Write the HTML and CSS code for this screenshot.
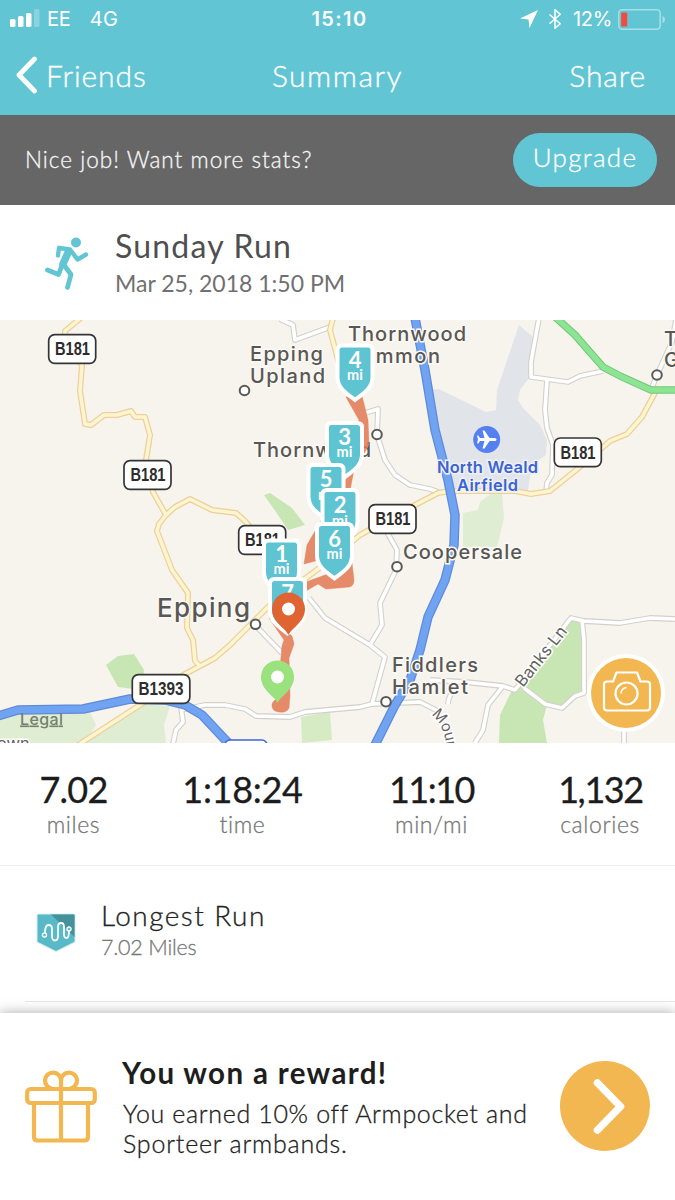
FILE: index.html
```html
<!DOCTYPE html>
<html lang="en">
<head>
<meta charset="utf-8">
<title>Summary</title>
<link rel="stylesheet" href="styles.css">
</head>
<body>
<div class="screen">
  <header class="top">
    <div class="status">
      <div class="status-left">
        <svg class="signal" width="31" height="20" viewBox="0 0 31 20" fill="#fff"><rect x="0" y="11" width="5.500" height="8" rx="1.500"/><rect x="8" y="8" width="5.500" height="11" rx="1.500"/><rect x="16" y="5" width="5.500" height="14" rx="1.500"/><rect x="24" y="1" width="5.500" height="18" rx="1.500" opacity=".25"/></svg>
        <span class="carrier">EE</span><span class="network">4G</span>
      </div>
      <span class="clock">15:10</span>
      <div class="status-right">
        <svg width="18" height="18" viewBox="0 0 18 18" fill="#fff"><path d="M18 0 9.500 18 8.500 9.500 0 8.500Z"/></svg>
        <svg class="bt" width="12" height="20" viewBox="0 0 12 20" fill="none" stroke="#fff" stroke-width="1.500"><path d="M.5 5.500 11.200 14.700 6 19.200V.8l5.200 4.500L.5 14.700"/></svg>
        <span class="percent">12%</span>
        <svg class="battery" width="48" height="21" viewBox="0 0 48 21"><rect x=".8" y=".8" width="41.400" height="19.400" rx="3.500" fill="none" stroke="#a5e0ea" stroke-width="1.500"/><rect x="3.200" y="3.500" width="6" height="14" rx="1" fill="#f4493c"/><path d="M44.500 7v7q2.500-1 2.500-3.500T44.500 7Z" fill="#a5e0ea"/></svg>
      </div>
    </div>
    <nav class="nav">
      <a class="back"><svg width="24" height="38" viewBox="0 0 24 38" fill="none" stroke="#fff" stroke-width="4.800" stroke-linecap="round" stroke-linejoin="round"><path d="M20.500 3 5 19l15.500 16"/></svg><span class="friends">Friends</span></a>
      <span class="title">Summary</span>
      <a class="share">Share</a>
    </nav>
  </header>

  <section class="banner">
    <span class="pitch">Nice job! Want more stats?</span>
    <a class="upgrade">Upgrade</a>
  </section>

  <section class="run">
    <svg class="runner" width="44" height="54" viewBox="0 0 44 54" fill="none" stroke="#62c5d3" stroke-linecap="round" stroke-linejoin="round"><circle cx="31" cy="5.500" r="5" fill="#62c5d3" stroke="none"/><path d="M13 18.500 14 10.800l11 1.700 7.500 10 8.500-5" stroke-width="4.400"/><path d="M23.500 14.500 18 27" stroke-width="7.500"/><path d="M17.500 27 13.500 37.500 2.500 33M19 28l7 9.500L22.500 50.500" stroke-width="4.800"/></svg>
    <div>
      <h1 class="run-name">Sunday Run</h1>
      <p class="run-date">Mar 25, 2018 1:50 PM</p>
    </div>
  </section>

  <svg class="map" width="675" height="423" viewBox="0 320 675 423">
    <defs>
      <path id="shield" d="M-13-.500h26q4.500 0 4.500 4.500v27C17.500 42 9 47 0 54-9 47-17.500 42-17.500 31V4q0-4.500 4.500-4.500Z"/>
      <path id="pin" d="M0 26C-3 19-16.500 13-16.500 0a16.500 16.500 0 0 1 33 0C16.500 13 3 19 0 26Z"/>
      <path id="mount" d="M431 715Q445 724 447 752"/>
    </defs>
    <rect y="320" width="675" height="423" fill="#f7f4ee"/>
    <g fill="#c8e5b4">
      <path d="m264 495 6-2 22 15 13 17-17 5-12-18Z"/>
      <path d="m106 665 12-9 16-2 10 16-2 20-24-3Z"/>
      <path d="m571 618 12 4 1 71-9 4-13 11-15-3-4 15 4 23h-48l1-28 12-25 8-10Z"/>
    </g>
    <g fill="#dfedd3">
      <path d="m463 513 15-3 2-8 12-9h10l2 25-7 29h-34Z"/>
      <path d="M0 714l28-9 62 7 6 13-11 18H0Z"/>
      <path d="m85 743 55-39 30 2-6 19 2 18Z"/>
      <path d="m301 717 29-5 2 28-30 3Z" fill="#d6ebc4"/>
    </g>
    <path d="m519 325 14 12-4 41-9 12-2 10 5 8 17 17 7 15-1 15-14 10-4 25h-83l-18-100 12-1 47 23 10-2 1-20Z" fill="#e1e4e9"/>
    <g class="lane lane-edge">
      <path d="m280 319 13 6 2 15 35-13M365 413l13-4-1 26 8 25 10 15 15 10 20 4 8 3"/>
      <path d="m539 318-8 44v15l37 5 12-6 23-5M547 380l-2 30 2 18 6 17-1 30-5 8-1 10M651 390l6-15 15-33 4-22"/>
      <path d="m309 598 16 20 45 27 15 12-13 47M370 645l12-20-2-22 16-33 1-20-10-18M255 625l27 28"/>
      <path d="m180 710 25-5h20l20 4 11 7 34 1 15-5 55-5 12-3 48-2 20 10M430 680l35 2 38 4 12 4 25-32 31-40 13 3 36 2 30-5 25 1M503 686l-15 19-5 25-8 13M455 690q-7 6-7 14M582 621l2 19v53l-9 3-13 12-17-4-21-16M181 707l2 15-7 8-3 14M624 730v14"/>
    </g>
    <g class="lane">
      <path d="m280 319 13 6 2 15 35-13M365 413l13-4-1 26 8 25 10 15 15 10 20 4 8 3"/>
      <path d="m539 318-8 44v15l37 5 12-6 23-5M547 380l-2 30 2 18 6 17-1 30-5 8-1 10M651 390l6-15 15-33 4-22"/>
      <path d="m309 598 16 20 45 27 15 12-13 47M370 645l12-20-2-22 16-33 1-20-10-18M255 625l27 28"/>
      <path d="m180 710 25-5h20l20 4 11 7 34 1 15-5 55-5 12-3 48-2 20 10M430 680l35 2 38 4 12 4 25-32 31-40 13 3 36 2 30-5 25 1M503 686l-15 19-5 25-8 13M455 690q-7 6-7 14M582 621l2 19v53l-9 3-13 12-17-4-21-16M181 707l2 15-7 8-3 14M624 730v14"/>
    </g>
    <g class="broad broad-edge">
      <path d="m82 317-17 14v14l17 20-2 26 5 33 6 1 13-10h13l14-4 4 6h10l5 18-4 25 7 32 13 23 9-8 15-8 22 11 24 3 9 8 25 30M166 515l-7 9-2 7 15 39 16 23-1 35 6 12 2 21 4 4M78 745l62-40 45-31 30-16 15-13 40-40 60-45 30-25 55-30 23-12 12-2h65l16 3 19-3 25-20 35-30 17-7 15-17 14-26M333 318l-3 12 8 30 17 40"/>
    </g>
    <g class="broad">
      <path d="m82 317-17 14v14l17 20-2 26 5 33 6 1 13-10h13l14-4 4 6h10l5 18-4 25 7 32 13 23 9-8 15-8 22 11 24 3 9 8 25 30M166 515l-7 9-2 7 15 39 16 23-1 35 6 12 2 21 4 4M78 745l62-40 45-31 30-16 15-13 40-40 60-45 30-25 55-30 23-12 12-2h65l16 3 19-3 25-20 35-30 17-7 15-17 14-26M333 318l-3 12 8 30 17 40"/>
    </g>
    <path d="m553 315 22 20 28 32 19 10 29 13h26" fill="none" stroke="#74c67a" stroke-width="7.500"/>
    <path d="m553 315 22 20 28 32 19 10 29 13h26" fill="none" stroke="#8be592" stroke-width="5.500"/>
    <g fill="none" stroke="#5f8bd8" stroke-width="9.500" stroke-linejoin="round"><path d="m415 318 10 52 10 60 13 50 7 35-1 30-9 35-17 37-8 33-10 30-15 25-21 42M-2 716l20-6 65-1 47-10 35 1 20 5 17 10 30 32"/></g>
    <g fill="none" stroke="#70a3f1" stroke-width="7" stroke-linejoin="round"><path d="m415 318 10 52 10 60 13 50 7 35-1 30-9 35-17 37-8 33-10 30-15 25-21 42M-2 716l20-6 65-1 47-10 35 1 20 5 17 10 30 32"/></g>
    <rect x="225" y="740" width="42" height="20" rx="5" fill="#fff" stroke="#3c66d6" stroke-width="1.500"/>

    <g class="place">
      <text x="250" y="361" textLength="73">Epping</text><text x="250" y="383" textLength="75">Upland</text>
      <text x="348" y="341" textLength="118">Thornwood</text><text x="346" y="363" textLength="94">Common</text>
      <text x="253" y="457" textLength="118">Thornwood</text>
      <text x="403" y="559" textLength="119">Coopersale</text>
      <text x="392" y="672" textLength="86">Fiddlers</text><text x="392" y="694" textLength="76">Hamlet</text>
      <text x="664" y="346">T</text><text x="664" y="367">G</text>
      <text class="town" x="157" y="616.500" textLength="93">Epping</text>
    </g>
    <g class="street">
      <text transform="translate(523 688) rotate(-51.500)" textLength="72">Banks Ln</text>
      <text class="bend"><textPath href="#mount">Moun</textPath></text>
      <text x="-3" y="749">own</text>
    </g>
    <text class="legal" x="20" y="724.500" textLength="43">Legal</text>
    <g class="airfield"><text x="437" y="473" textLength="101">North Weald</text><text x="457" y="491" textLength="61">Airfield</text></g>
    <circle cx="486.700" cy="439.500" r="13.500" fill="#5580f0"/>
    <path d="M496.500 439.500q0-1.500-2-1.500h-5l-5-7.500h-2l2 7.500h-4.500l-1.700-2.500H477l1 4-1 4h1.300l1.700-2.500h4.500l-2 7.500h2l5-7.500h5q2 0 2-1.500Z" fill="#fff"/>
    <g fill="#fff" stroke="#5b5956" stroke-width="2"><circle cx="244.500" cy="390.500" r="4.800"/><circle cx="377" cy="434.500" r="4.800"/><circle cx="657" cy="375" r="4.800"/><circle cx="397" cy="566.700" r="4.800"/><circle cx="386" cy="701.700" r="4.800"/><circle cx="255.500" cy="624.300" r="4.800"/></g>

    <g class="road-sign">
      <rect x="48.700" y="334.700" width="47" height="28.600" rx="6"/><text x="55" y="355" textLength="35" lengthAdjust="spacingAndGlyphs">B181</text>
      <rect x="124" y="460.700" width="47" height="28.600" rx="6"/><text x="130.500" y="481" textLength="35" lengthAdjust="spacingAndGlyphs">B181</text>
      <rect x="369" y="504.700" width="47" height="28.600" rx="6"/><text x="375.500" y="525" textLength="35" lengthAdjust="spacingAndGlyphs">B181</text>
      <rect x="554.300" y="438" width="47" height="28.600" rx="6"/><text x="560.500" y="458.500" textLength="35" lengthAdjust="spacingAndGlyphs">B181</text>
      <rect x="238.700" y="525.700" width="47" height="28.600" rx="6"/><text x="245" y="546" textLength="35" lengthAdjust="spacingAndGlyphs">B181</text>
      <rect x="132.300" y="674.700" width="57.500" height="28.600" rx="6"/><text x="138.500" y="695" textLength="45" lengthAdjust="spacingAndGlyphs">B1393</text>
    </g>

    <g fill="#e27650" fill-opacity=".84" stroke="#e27650" stroke-opacity=".4" stroke-linejoin="round">
      <path d="m346 397 16-1 6 24 1 25-15 25-5 25-10 35-20 30-15 4 3-19 30-52 12-38 10-35Z"/>
      <path d="m306 582 19-7 27-12 2 17q0 6-5 7l-23 2-8-5-12 7v8Z"/>
      <path d="m269 618 23 18 2 8-5 14 1 38-1 12q-2 5-10 4-8-1-7-8 2-5 7-5l3-11-2-20 2-22 2-6Z"/>
    </g>

    <g class="mile">
      <g transform="translate(355 346)"><use href="#shield"/><text y="22">4</text><text class="unit" y="33.500">mi</text></g>
      <g transform="translate(344.500 423.500)"><use href="#shield"/><text y="21.500">3</text><text class="unit" y="33.500">mi</text></g>
      <g transform="translate(326 465.500)"><use href="#shield"/><text y="21.500">5</text><text class="unit" y="34">mi</text></g>
      <g transform="translate(340 490.500)"><use href="#shield"/><text y="22">2</text><text class="unit" y="35">mi</text></g>
      <g transform="translate(334.500 524.500)"><use href="#shield"/><text y="22">6</text><text class="unit" y="34">mi</text></g>
      <g transform="translate(281.500 541)"><use href="#shield"/><text y="21">1</text><text class="unit" y="33">mi</text></g>
      <g transform="translate(287.500 579.500)"><use href="#shield"/><text y="21">7</text></g>
    </g>
    <g fill="#e06432" transform="translate(288.500 609)"><use href="#pin"/><circle r="6.500" fill="#fff"/></g>
    <g fill="#99e27d" transform="translate(277.500 677)"><use href="#pin"/><circle r="6.500" fill="#fff"/></g>

    <circle cx="626" cy="693" r="39" fill="#fff"/><circle cx="626" cy="693" r="35" fill="#f2b751"/>
    <g fill="none" stroke="#fff" stroke-width="2.200" stroke-linejoin="round"><path d="M607 681.500h6l3.500-9h20.500l3.500 9h6.500q3 0 3 3v23q0 3-3 3H607q-3 0-3-3v-23q0-3 3-3Z"/><circle cx="626.500" cy="693.500" r="11"/><path d="M621 693.500q0-5 5.500-6" stroke-width="1.500"/></g>
  </svg>

  <section class="stats">
    <div class="stat distance"><b>7.02</b><span>miles</span></div>
    <div class="stat duration"><b>1:18:24</b><span>time</span></div>
    <div class="stat pace"><b>11:10</b><span>min/mi</span></div>
    <div class="stat energy"><b>1,132</b><span>calories</span></div>
  </section>

  <section class="record">
    <svg width="40" height="40" viewBox="0 0 40 40"><path d="M2.500 1h35q1.500 0 1.500 1.500V29L20 38.500 1 29V2.500Q1 1 2.500 1Z" fill="#58bac8" stroke="#d7edf1"/><path d="M15 1.500h22.500q1 0 1 1V24Z" fill="#44919c"/><path d="M9 20Q9 12 12.500 12T16 16v7q0 4.500 3 4.500t3-4.500v-9q0-4 3-4t3 4v7q0 4 2.500 4t2.500-7" fill="none" stroke="#fff" stroke-width="1.800"/><circle cx="8.500" cy="22" r="2" fill="#58bac8" stroke="#fff" stroke-width="1.300"/><circle cx="33" cy="16" r="2" fill="#58bac8" stroke="#fff" stroke-width="1.300"/></svg>
    <div>
      <h2 class="record-name">Longest Run</h2>
      <p class="record-value">7.02 Miles</p>
    </div>
  </section>
  <div class="divider"></div>

  <section class="reward">
    <svg class="gift" width="72" height="74" viewBox="0 0 72 74" fill="none" stroke="#f2b751" stroke-width="4.200" stroke-linejoin="round"><rect x="2.200" y="19" width="67.600" height="14" rx="3.500"/><path d="M9 33v34q0 3.500 3.500 3.500h47q3.500 0 3.500-3.500V33M36 19v51"/><path d="M36 18.500V10.500a8 8 0 1 0-9 8M36 10.500a8 8 0 1 1 9 8"/></svg>
    <div class="offer">
      <h2 class="offer-title">You won a reward!</h2>
      <p class="offer-text"><span class="line-a">You earned 10% off Armpocket and</span><br><span class="line-b">Sporteer armbands.</span></p>
    </div>
    <svg class="go" width="90" height="90" viewBox="0 0 90 90"><circle cx="45" cy="45" r="45" fill="#f2b751"/><path d="m37.500 22 23 23.500-23 23.500" fill="none" stroke="#fff" stroke-width="7.500" stroke-linecap="round" stroke-linejoin="round"/></svg>
  </section>
</div>
</body>
</html>
```
FILE: styles.css
```css
* { box-sizing: border-box; }
body { margin: 0; background: #fff; font-family: Lato, "Open Sans", sans-serif; }
h1, h2, p { margin: 0; font-weight: 400; }
svg { display: block; flex: none; }
.screen { width: 675px; height: 1200px; overflow: hidden; display: flex; flex-direction: column; background: #fff; }

.top { height: 115px; flex: none; background: #62c5d3; color: #fff; }
.status { height: 35px; padding: 2px 10px 0; display: grid; grid-template-columns: 1fr auto 1fr; align-items: center; font: 400 20px/34px Inter, sans-serif; }
.status-left { display: flex; align-items: center; }
.signal { margin-top: -2px; }
.carrier { margin-left: 6px; letter-spacing: -.2px; }
.network { margin-left: 19px; letter-spacing: .3px; }
.clock { font-weight: 600; letter-spacing: 1.4px; padding-left: 4px; }
.status-right { display: flex; align-items: center; justify-content: flex-end; margin-right: 1px; }
.bt { margin-left: 11px; }
.percent { margin-left: 12px; letter-spacing: -.3px; }
.battery { margin-left: 6px; margin-right: -2px; }
.nav { height: 80px; padding: 0 30px 0 14px; display: grid; grid-template-columns: 1fr auto 1fr; align-items: center; font-size: 30px; font-weight: 300; -webkit-text-stroke: .35px currentColor; }
.back { display: flex; align-items: center; gap: 8px; }
.friends, .share { letter-spacing: .9px; }
.title { letter-spacing: 1.5px; padding-left: 16px; }
.share { text-align: right; margin-right: -1px; }

.banner { height: 90px; flex: none; background: #666; color: #f6f6f6; display: flex; align-items: center; justify-content: space-between; padding: 0 18px 0 25px; font-weight: 300; -webkit-text-stroke: .3px currentColor; }
.pitch { font-size: 22.5px; letter-spacing: 1.03px; padding-bottom: 2px; }
.upgrade { width: 144px; height: 54px; border-radius: 27px; background: #62c5d3; color: #fff; font-size: 26px; line-height: 49px; text-align: center; letter-spacing: 1.3px; }

.run { height: 115px; flex: none; display: flex; padding: 24px 0 0 45px; gap: 26px; }
.runner { margin-top: 8px; }
.run-name { font-size: 32px; line-height: 34px; color: #4f4f4f; letter-spacing: 1.2px; }
.run-date { font-size: 23px; line-height: 26px; margin-top: 7px; color: #707070; letter-spacing: 0; }

.map { font-family: Inter, sans-serif; }
.lane, .broad { fill: none; stroke-linejoin: round; stroke: #fff; stroke-width: 3.600px; }
.lane-edge { stroke: #d3d0cc; stroke-width: 5.800px; }
.broad { stroke: #fff5cf; stroke-width: 3.500px; }
.broad-edge { stroke: #ecd09c; stroke-width: 6px; }
.place { font-size: 20px; font-weight: 500; fill: #595754; stroke: #fbf9f5; stroke-width: 3px; paint-order: stroke; }
.town { font-size: 26px; }
.street { font-size: 16.500px; fill: #65625f; stroke: #fff; stroke-width: 3px; paint-order: stroke; }
.bend { font-size: 15px; }
.legal { font-size: 16px; font-weight: 500; fill: #75806e; text-decoration: underline; }
.airfield { font-size: 16.500px; font-weight: 600; fill: #3d63d0; stroke: #eef1f8; stroke-width: 3px; paint-order: stroke; }
.road-sign rect { fill: #fff; stroke: #353535; stroke-width: 1.700px; }
.road-sign text { font: 700 18px "Liberation Sans", sans-serif; fill: #2d2d2d; }
.mile { font: 700 22px Lato, sans-serif; text-anchor: middle; fill: #fff; }
.mile use { fill: #5ec4d2; stroke: #fff; stroke-width: 4px; }
.mile .unit { font-size: 14.500px; }

.stats { height: 123px; flex: none; border-bottom: 1px solid #ededed; display: grid; grid-template-columns: 147px 191px 187px 150px; text-align: center; padding-top: 25px; }
.stat b { display: block; font-size: 36px; line-height: 42px; font-weight: 400; color: #1c1c1c; -webkit-text-stroke: .3px currentColor; letter-spacing: -.8px; }
.stat.duration b { letter-spacing: -.3px; }
.stat.pace b { letter-spacing: -1.5px; }
.stat.energy b { letter-spacing: -1.4px; padding-left: 1px; }
.stat span { display: block; font-size: 23px; font-weight: 300; line-height: 28px; color: #777; letter-spacing: .6px; -webkit-text-stroke: .3px currentColor; }

.record { height: 135px; flex: none; display: flex; padding: 32px 0 0 36px; gap: 25px; -webkit-text-stroke: .3px currentColor; }
.record svg { margin-top: 15px; }
.record-name { font-size: 28px; line-height: 34px; font-weight: 300; color: #222; letter-spacing: 1.45px; }
.record-value { font-size: 21.500px; line-height: 28px; font-weight: 300; color: #777; letter-spacing: -.2px; margin-top: 1px; }
.divider { height: 12px; flex: none; margin-left: 25px; border-top: 1px solid #e6e6e6; }

.reward { height: 187px; flex: none; background: #fff; box-shadow: 0 0 12px rgba(0, 0, 0, .34); display: flex; padding: 43px 25px 0; }
.gift { margin-top: 14px; }
.offer { flex: 1; margin-left: 26px; white-space: nowrap; }
.offer-title { font-size: 29.500px; line-height: 34px; font-weight: 700; color: #1e1e1e; letter-spacing: 1.35px; margin-left: -1px; }
.offer-text { font-size: 25px; line-height: 30px; margin-top: 8px; font-weight: 300; color: #222; -webkit-text-stroke: .3px currentColor; }
.line-a { letter-spacing: .66px; }
.line-b { letter-spacing: .8px; }
.go { margin-top: 5px; }
```
